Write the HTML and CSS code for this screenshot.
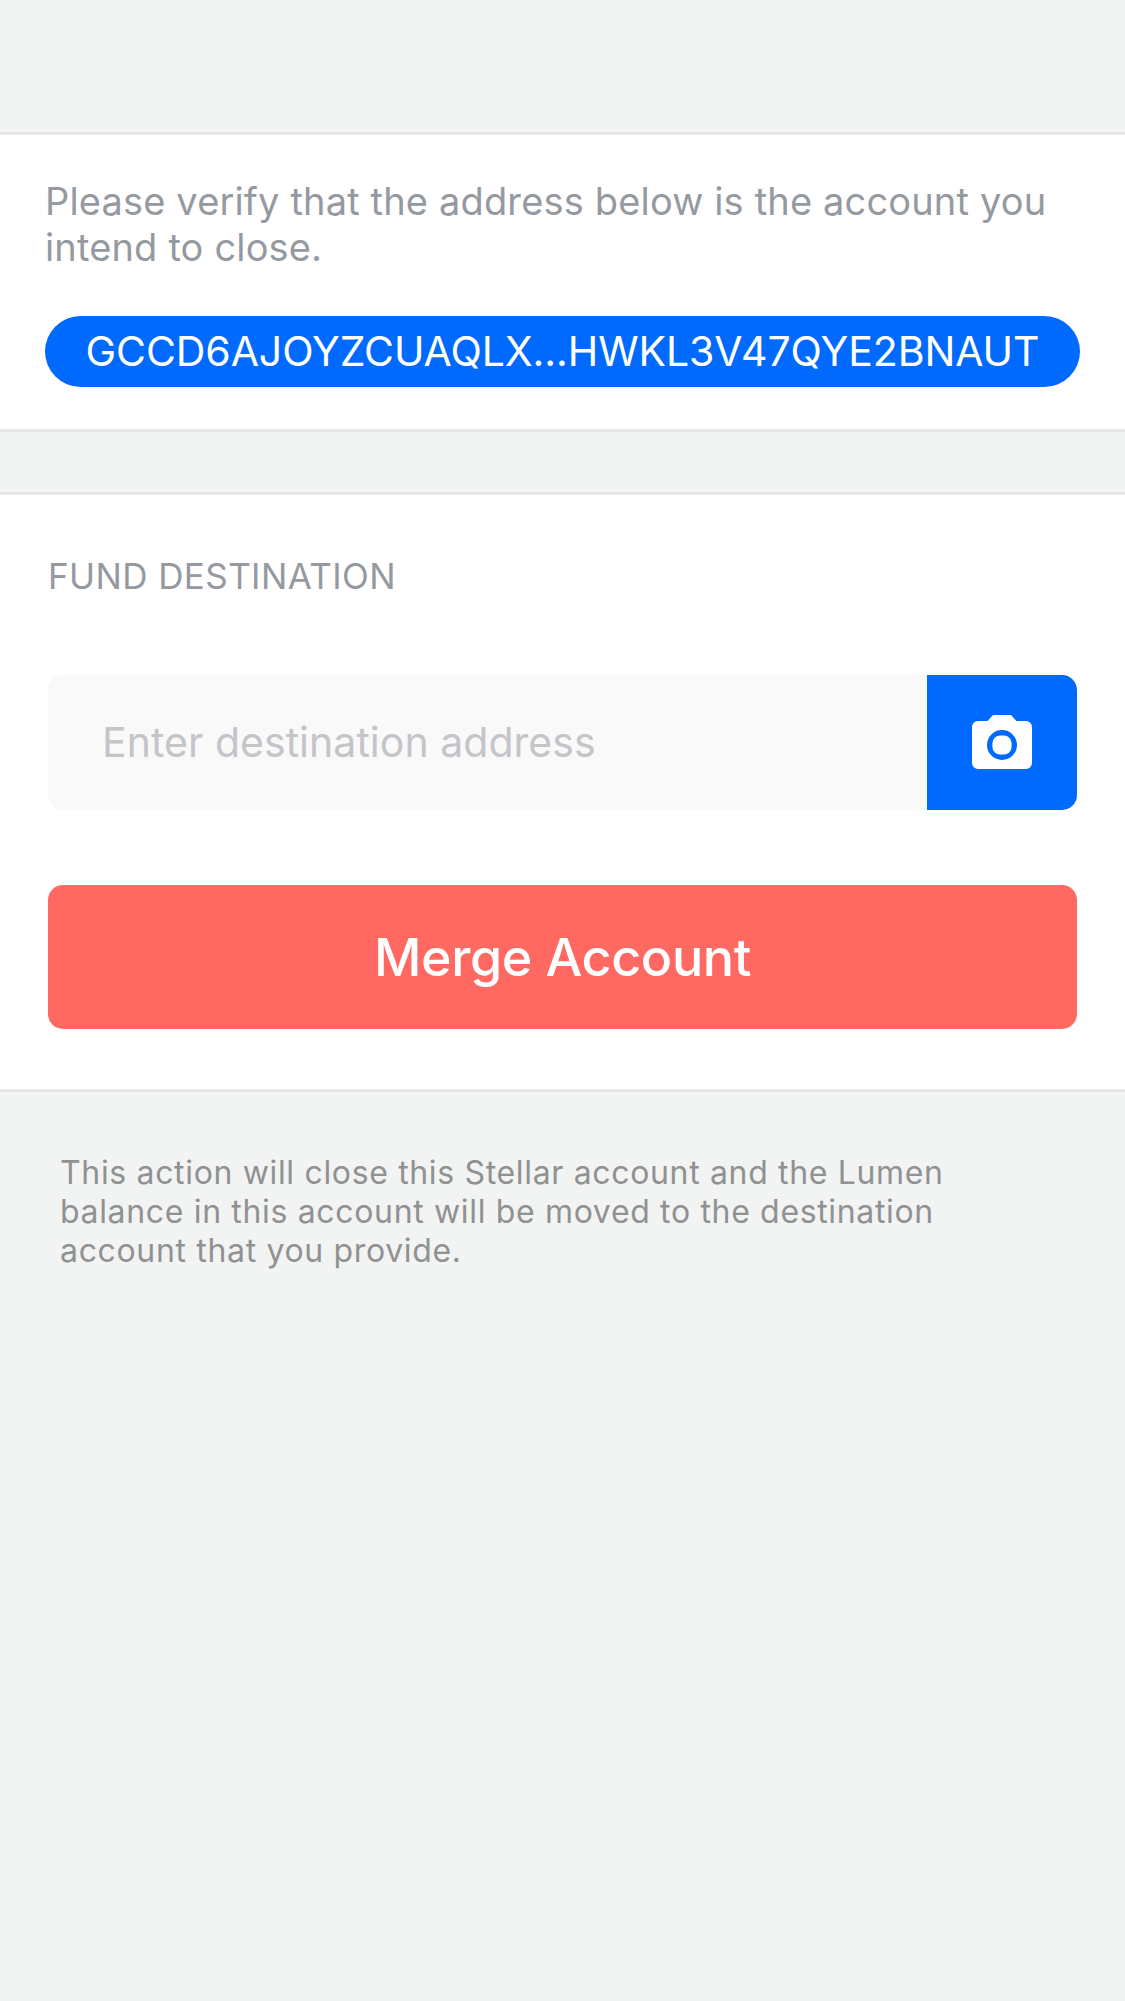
FILE: index.html
```html
<!DOCTYPE html>
<html lang="en">
<head>
<meta charset="utf-8">
<title>Merge Account</title>
<link rel="stylesheet" href="styles.css">
</head>
<body>
<main class="screen">
  <section class="card verify">
    <p class="verify-text">Please verify that the address below is the account you intend to close.</p>
    <div class="address-pill">GCCD6AJOYZCUAQLX...HWKL3V47QYE2BNAUT</div>
  </section>
  <section class="card destination">
    <h2 class="section-title">FUND DESTINATION</h2>
    <div class="field">
      <input class="field-input" type="text" placeholder="Enter destination address">
      <button class="scan-button" type="button" aria-label="Scan address">
        <svg class="camera-icon" viewBox="0 0 24 24">
          <path fill="#fff" fill-rule="evenodd" d="M9 2 7.17 4H4a2 2 0 0 0-2 2v12a2 2 0 0 0 2 2h16a2 2 0 0 0 2-2V6a2 2 0 0 0-2-2h-3.170L15 2H9Zm3 15a5 5 0 1 1 0-10 5 5 0 0 1 0 10Z"/>
          <rect fill="#fff" x="8.8" y="8.8" width="6.4" height="6.4" rx="2.6"/>
        </svg>
      </button>
    </div>
    <button class="merge-button" type="button">Merge Account</button>
  </section>
  <p class="note">This action will close this Stellar account and the Lumen balance in this account will be moved to the destination account that you provide.</p>
</main>
</body>
</html>
```
FILE: styles.css
```css
* {
  box-sizing: border-box;
}

body {
  margin: 0;
  background: #f2f4f3;
  font-family: Inter, "Liberation Sans", sans-serif;
}

.screen {
  min-height: 2001px;
  padding-top: 132px;
}

.card {
  background: #fff;
  border-top: 3px solid #e6e6e6;
  border-bottom: 3px solid #e6e6e6;
}

.verify {
  padding: 43px 45px 42px;
}

.verify-text {
  margin: 0 0 46px;
  color: #9599a0;
  font-size: 38px;
  line-height: 46px;
  letter-spacing: 0.16px;
}

.address-pill {
  height: 71px;
  border-radius: 36px;
  background: #006aff;
  color: #fff;
  font-size: 41px;
  line-height: 71px;
  letter-spacing: -0.09px;
  text-align: center;
  white-space: nowrap;
}

.destination {
  margin-top: 60px;
  padding: 59px 48px 60px;
}

.section-title {
  margin: 0 0 77px;
  color: #9599a0;
  font-size: 35px;
  font-weight: 400;
  line-height: 44px;
  letter-spacing: 0.4px;
}

.field {
  display: flex;
  height: 135px;
  margin-bottom: 75px;
  border-radius: 15px;
  overflow: hidden;
  background: #f9f9f9;
}

.field-input {
  flex: 1;
  min-width: 0;
  padding: 0 54px;
  border: 0;
  background: transparent;
  font: 400 41px/135px Inter, "Liberation Sans", sans-serif;
  letter-spacing: 0.03px;
}

.field-input::placeholder {
  color: #c4c4c9;
  opacity: 1;
}

.scan-button {
  display: flex;
  align-items: center;
  justify-content: center;
  width: 150px;
  padding: 5px 0 0;
  border: 0;
  background: #006aff;
}

.camera-icon {
  width: 72px;
  height: 72px;
}

.merge-button {
  display: block;
  width: 100%;
  height: 144px;
  padding: 2px 0 0;
  border: 0;
  border-radius: 15px;
  background: #ff6961;
  color: #fff;
  font: 500 52px/142px Inter, "Liberation Sans", sans-serif;
  letter-spacing: -0.37px;
}

.note {
  margin: 0;
  padding: 61px 150px 0 60px;
  color: #919191;
  font-size: 32px;
  line-height: 39px;
  letter-spacing: 0.66px;
}
```
